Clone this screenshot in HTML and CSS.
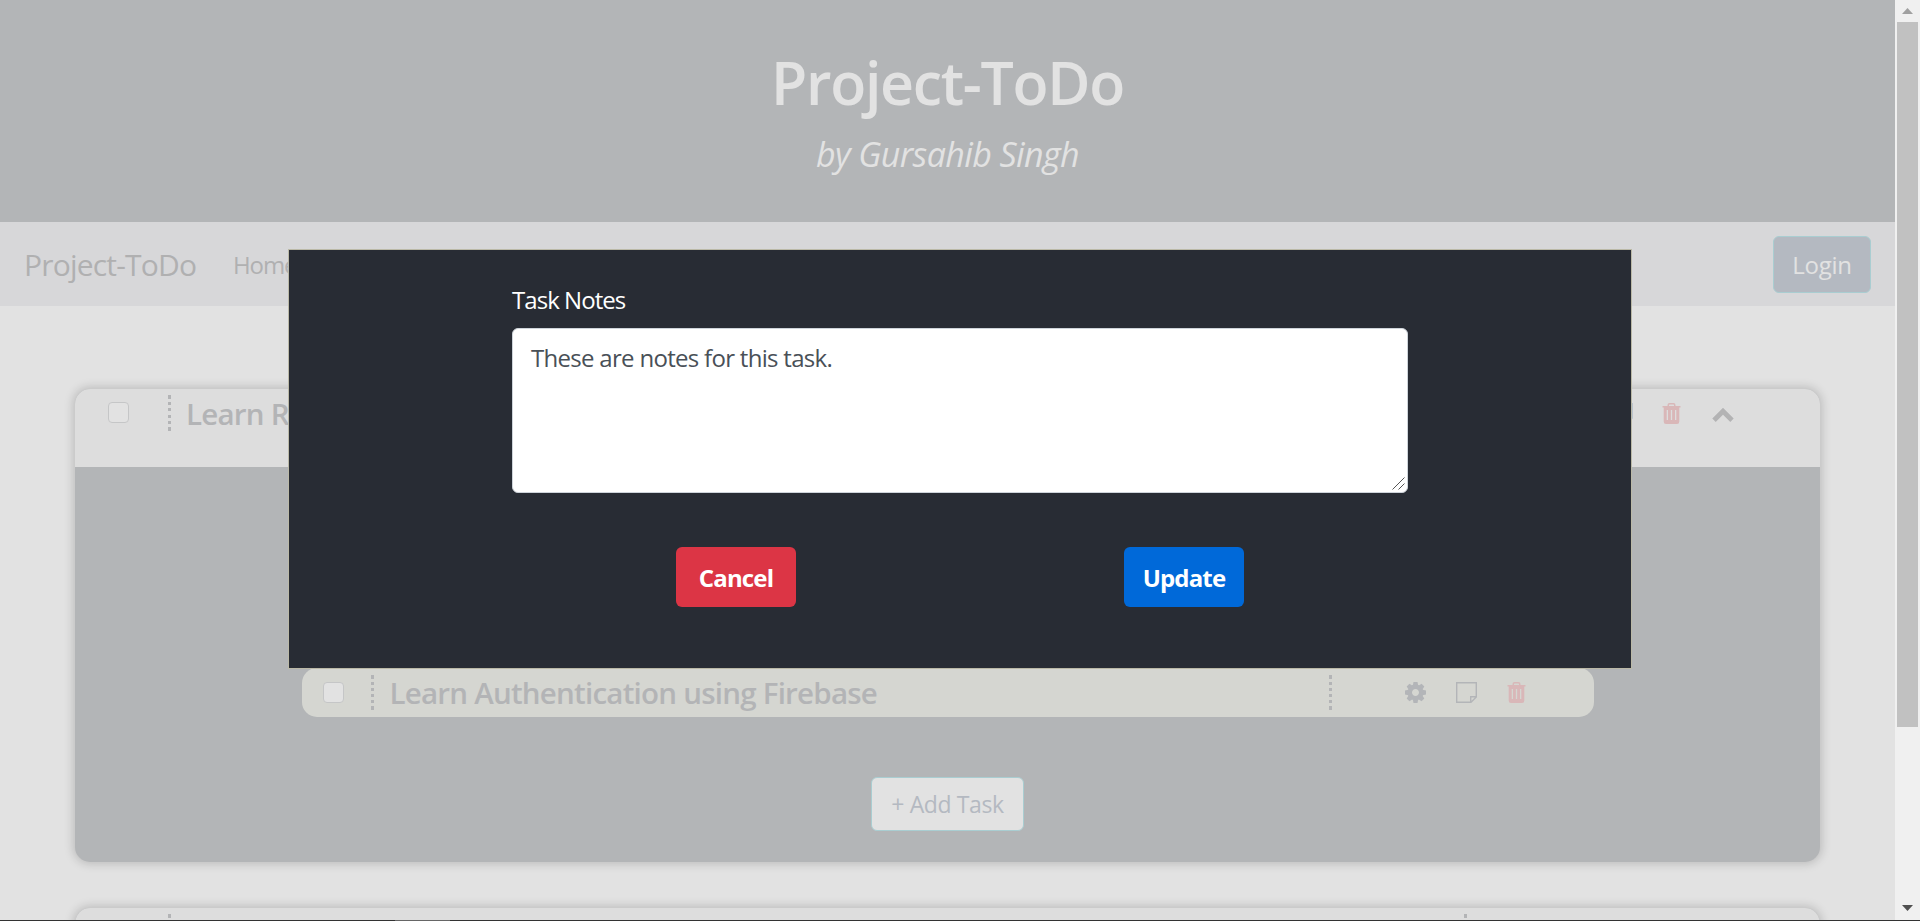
FILE: index.html
```html
<!DOCTYPE html>
<html lang="en">
<head>
<meta charset="utf-8">
<title>Project-ToDo</title>
<link rel="stylesheet" href="styles.css">
</head>
<body>
<svg class="sprite" aria-hidden="true">
  <symbol id="trash" viewBox="0 0 18 21"><path fill-rule="evenodd" d="M5 3V2Q5 0 7 0H11Q13 0 13 2V3H18V4.500H16.800V18.500Q16.800 21 14.500 21H3.500Q1.200 21 1.200 18.500V4.500H0V3ZM6.500 3H11.500V2Q11.500 1.500 11 1.500H7Q6.500 1.500 6.500 2ZM4.200 7V17H5.500V7ZM8.350 7V17H9.650V7ZM12.500 7V17H13.800V7Z"/></symbol>
  <symbol id="gear" viewBox="-10.500 -10.500 21 21">
    <circle r="5.700" fill="none" stroke="currentColor" stroke-width="4.400"/>
    <g id="teeth">
      <path id="tooth" d="M-2.700 -7L-2 -10.500H2L2.700 -7Z"/>
      <use href="#tooth" transform="rotate(45)"/>
      <use href="#tooth" transform="rotate(90)"/>
      <use href="#tooth" transform="rotate(135)"/>
      <use href="#tooth" transform="rotate(180)"/>
      <use href="#tooth" transform="rotate(225)"/>
      <use href="#tooth" transform="rotate(270)"/>
      <use href="#tooth" transform="rotate(315)"/>
    </g>
  </symbol>
  <symbol id="note" viewBox="0 0 21 21"><path fill="none" stroke="currentColor" stroke-width="1.400" d="M.7.700H20.300V15L15 20.300H.7ZM20.300 14.700H14.700V20.300M15 20.300L20.300 15"/></symbol>
</svg>
<div class="screen">
  <main class="page">
    <header class="hero">
      <h1 class="hero-title">Project-ToDo</h1>
      <p class="hero-sub">by Gursahib Singh</p>
    </header>
    <nav class="navbar">
      <a class="brand">Project-ToDo</a>
      <a class="nav-link">Home</a>
      <button class="login">Login</button>
    </nav>
    <section class="card">
      <div class="card-head">
        <span class="check"></span>
        <span class="dots"><i class="end"></i><i></i><i></i><i></i><i></i><i class="end"></i></span>
        <h2 class="project-name">Learn React</h2>
        <svg class="icon"><use href="#note"/></svg>
        <svg class="icon-trash danger"><use href="#trash"/></svg>
        <svg class="icon-up" viewBox="0 0 22 14"><path d="M2 12.200L11 3.200L20 12.200" fill="none" stroke="#b3b3b4" stroke-width="4.800"/></svg>
      </div>
      <div class="card-body">
        <div class="task">
          <span class="check"></span>
          <span class="dots"><i class="end"></i><i></i><i></i><i></i><i></i><i class="end"></i></span>
          <h3 class="task-name">Learn Authentication using Firebase</h3>
          <span class="dots"><i class="end"></i><i></i><i></i><i></i><i></i><i class="end"></i></span>
          <span class="actions">
            <svg class="icon"><use href="#gear"/></svg>
            <svg class="icon"><use href="#note"/></svg>
            <svg class="icon-trash danger"><use href="#trash"/></svg>
          </span>
        </div>
        <button class="add-task">+ Add Task</button>
      </div>
    </section>
    <section class="card next">
      <div class="card-head">
        <span class="dots first"><i class="end"></i><i></i></span>
        <span class="dots second"><i class="end"></i><i></i></span>
      </div>
    </section>
  </main>
  <aside class="scrollbar">
    <svg class="arrow up" viewBox="0 0 11 6"><path d="M0 6L5.500 0L11 6Z"/></svg>
    <div class="thumb"></div>
    <svg class="arrow down" viewBox="0 0 11 6"><path d="M0 0L5.500 6L11 0Z"/></svg>
  </aside>
  <div class="modal">
    <label class="field-label" for="notes">Task Notes</label>
    <div class="field">
      <textarea class="notes" id="notes">These are notes for this task.</textarea>
      <svg class="grip" viewBox="0 0 13 13"><path d="M.5 12.500L12.500 .5M6.500 12.500L12.500 6.500" fill="none" stroke="#555" stroke-width="1"/></svg>
    </div>
    <div class="buttons">
      <button class="btn cancel">Cancel</button>
      <button class="btn update">Update</button>
    </div>
  </div>
  <div class="edge"><span class="edge-mark"></span></div>
</div>
</body>
</html>
```
FILE: styles.css
```css
* { box-sizing: border-box; }
body { margin: 0; font-family: "Open Sans", "Noto Sans", sans-serif; }
h1, h2, h3, p { margin: 0; }
button { font-family: inherit; padding: 0; white-space: nowrap; }
.sprite { position: absolute; width: 0; height: 0; }
.screen { position: relative; display: flex; width: 1920px; height: 921px; overflow: hidden; }
.page { width: 1895px; height: 921px; overflow: hidden; background: #e2e2e2; }

.hero { height: 222px; padding-top: 37px; background: #b3b5b7; color: #e2e2e2; text-align: center; }
.hero-title { font-size: 59px; line-height: 90px; font-weight: 600; letter-spacing: -1.300px; }
.hero-sub { padding-top: 2px; font-size: 34px; line-height: 50px; font-style: italic; letter-spacing: -0.600px; }

.navbar { display: flex; align-items: center; height: 84px; padding: 0 24px 0 24px; background: #d7d7d9; color: #b0b0b1; }
.brand { width: 209px; padding-top: 1px; font-size: 30px; line-height: 40px; letter-spacing: -0.800px; }
.nav-link { padding-top: 1px; font-size: 24px; line-height: 36px; letter-spacing: -1.100px; }
.login { width: 98px; height: 57px; margin-left: auto; border: 1px solid #a9cdd1; border-radius: 6px; background: #b4b9c1; color: #e2e2e2; font-size: 24px; letter-spacing: -0.300px; }

.card { width: 1745px; height: 473px; margin: 83px 0 0 75px; border-radius: 15px; overflow: hidden; background: #b3b5b7; box-shadow: 0 0 10px 2px rgba(0, 0, 0, .17); }
.card.next { margin-top: 46px; }
.card-head { display: flex; height: 78px; padding: 6px 82px 0 33px; background: #ddd; color: #b3b4b6; }
.check { flex: none; width: 21px; height: 21px; border: 1px solid #c5c6c7; border-radius: 4px; background: #e2e2e2; }
.card-head .check { margin-top: 7px; }
.dots { flex: none; display: flex; flex-direction: column; justify-content: space-between; width: 3px; height: 36px; }
.dots i { height: 3px; background: #b3b4b6; }
.dots .end { height: 4px; }
.card-head .dots { margin-left: 39px; }
.card-head .first { height: 11px; margin-left: 60px; }
.card-head .second { height: 11px; margin-left: 1293px; }
.project-name, .task-name { font-size: 29.500px; line-height: 40px; font-weight: 600; letter-spacing: -0.760px; white-space: nowrap; }
.project-name { flex: none; width: 1426px; margin-left: 15px; margin-top: -1px; }
.icon { flex: none; width: 21px; height: 21px; fill: #b3b5b8; color: #b3b5b8; }
.icon-trash { flex: none; width: 19px; height: 21px; }
.danger { fill: #d9b7b8; }
.card-head .icon { margin: 8px 29px 0 0; color: #b9c3cd; }
.card-head .icon-trash { margin-top: 8px; }
.icon-up { flex: none; width: 22px; height: 14px; margin: 13px 0 0 31px; }

.card-body { display: flex; flex-direction: column; align-items: center; height: 395px; padding-top: 201px; }
.task { display: flex; align-items: center; width: 1292px; height: 49px; padding-left: 21px; border-radius: 15px; background: #d5d6d1; color: #b3b4b6; }
.task .dots { margin-left: 27px; }
.task-name { width: 939px; margin-left: 16px; padding-top: 1px; }
.task .task-name + .dots { margin-left: 0; }
.actions { display: flex; gap: 30px; margin-left: 73px; }
.add-task { width: 153px; height: 54px; margin-top: 60px; border: 1px solid #a9cdd1; border-radius: 6px; background: #e2e2e2; color: #b4b9c1; font-size: 23px; font-weight: 500; letter-spacing: -0.400px; }

.scrollbar { display: flex; flex-direction: column; align-items: center; width: 25px; background: #f0f0f0; }
.arrow { width: 11px; height: 6px; margin: 8px 0; fill: #505050; }
.arrow.up { fill: #a0a0a0; }
.thumb { width: 21px; height: 705px; background: #c1c1c1; }
.arrow.down { margin-top: auto; margin-bottom: 10px; }

.modal { position: absolute; left: 288px; top: 249px; width: 1344px; height: 420px; padding: 31px 223px 0; border: 1px solid #bbb9a7; background: #282c34; }
.field-label { display: block; margin-bottom: 9px; color: #fff; font-size: 24px; line-height: 38px; letter-spacing: -0.950px; }
.field { position: relative; height: 165px; }
.notes { display: block; width: 896px; height: 165px; padding: 10px 18px; border: 1px solid #ced4da; border-radius: 6px; resize: none; background: #fff; color: #495057; font: 24px/38px "Open Sans", "Noto Sans", sans-serif; letter-spacing: -0.700px; }
.grip { position: absolute; right: 3px; bottom: 3px; width: 13px; height: 13px; }
.buttons { display: flex; justify-content: space-between; padding: 54px 164px 0; }
.btn { width: 120px; height: 60px; border: 0; border-radius: 6px; color: #fff; font-size: 24px; font-weight: 700; letter-spacing: -0.850px; }
.cancel { background: #dc3545; }
.update { background: #0069d9; }

.edge { position: absolute; left: 0; bottom: 0; width: 1920px; height: 1px; padding-left: 395px; background: #333; }
.edge-mark { display: block; width: 55px; height: 1px; background: #666; }
```
